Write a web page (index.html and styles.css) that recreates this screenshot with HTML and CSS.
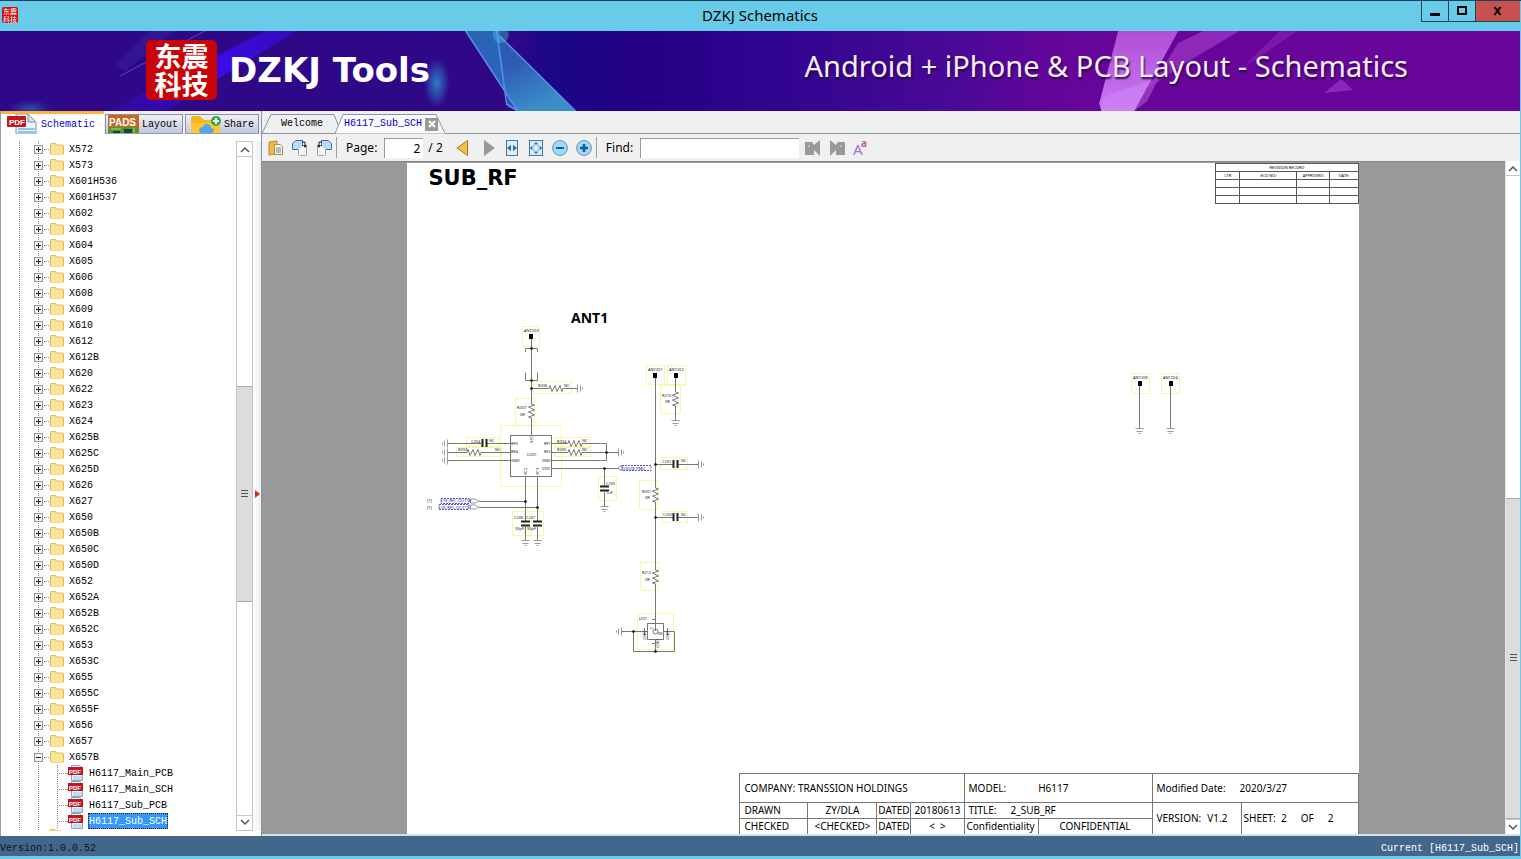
FILE: index.html
```html
<!DOCTYPE html>
<html lang="en">
<head>
<meta charset="utf-8">
<title>DZKJ Schematics</title>
<link rel="stylesheet" href="styles.css">
</head>
<body>
<div class="window">
  <header class="titlebar">
    <span class="app-icon" aria-hidden="true"><span>东震</span><span>科技</span></span>
    <h1 class="title">DZKJ Schematics</h1>
    <div class="controls">
      <button class="ctl min" aria-label="Minimize"><svg width="12" height="12"><path d="M1 9.500h10" stroke="#000" stroke-width="3"/></svg></button>
      <button class="ctl max" aria-label="Maximize"><svg width="12" height="12"><path d="M2 2h8v7H2z" fill="none" stroke="#000" stroke-width="2"/></svg></button>
      <button class="ctl close" aria-label="Close"><svg width="12" height="12"><path d="M2.500 2l6 8M8.500 2l-6 8" stroke="#000" stroke-width="2"/></svg></button>
    </div>
  </header>

  <section class="banner">
    <svg class="banner-art" viewBox="0 0 1521 80" preserveAspectRatio="none" aria-hidden="true">
      <defs>
        <linearGradient id="beam" x1="0" y1="1" x2="1" y2="0"><stop offset="0" stop-color="#3a0be0" stop-opacity=".2"/><stop offset=".6" stop-color="#3c0be8"/><stop offset="1" stop-color="#3c0be8" stop-opacity=".5"/></linearGradient>
        <linearGradient id="shard" x1="0" y1="0" x2=".6" y2="1"><stop offset="0" stop-color="#215aa0"/><stop offset=".5" stop-color="#2f5bb5"/><stop offset="1" stop-color="#3a8fc8"/></linearGradient>
        <linearGradient id="pink" x1="0" y1="0" x2="0" y2="1"><stop offset="0" stop-color="#b04fd6"/><stop offset="1" stop-color="#c878f4"/></linearGradient>
        <radialGradient id="glow"><stop offset="0" stop-color="#2c7cc4"/><stop offset="1" stop-color="#2c7cc4" stop-opacity="0"/></radialGradient>
      </defs>
      <path d="M110 80 L265 0 H297 L165 80z" fill="url(#beam)"/>
      <path d="M120 45 L205 0" stroke="#5a44c8"/>
      <path d="M115 35 L150 0 H175 L125 40z" fill="#3c2aa0" opacity=".4"/>
      <ellipse cx="437" cy="52" rx="13" ry="25" fill="url(#glow)"/>
      <ellipse cx="30" cy="78" rx="22" ry="9" fill="url(#glow)" opacity=".6"/>
      <path d="M466 0 H496 L500 5 L576 80 H518z" fill="url(#shard)"/>
      <path d="M466 0 H500 L508 76 L518 80z" fill="#2c68b8" opacity=".8"/>
      <path d="M466 0 L518 80M500 5L576 80M497 0L507 73L518 80" stroke="#5b8df0" fill="none" stroke-width="1.500"/>
      <circle cx="501" cy="4" r="8" fill="#4cc8d8" opacity=".4"/>
      <path d="M1119 0 H1179 L1135 80 H1102 L1100 72z" fill="url(#pink)"/>
      <path d="M1104 66 L1160 46 L1148 70 L1135 80 H1102z" fill="#d694fb" opacity=".35"/>
      <path d="M1179 12 L1204 0 H1240 L1190 30 L1145 60 L1165 34z" fill="#a43cc8" opacity=".65"/>
      <path d="M1245 35L1280 0H1298L1262 25z" fill="#9a34c0" opacity=".4"/>
      <path d="M1325 62L1342 48L1354 59z" fill="#a040c8" opacity=".6"/>
    </svg>
    <div class="logo" aria-hidden="true"><span>东震</span><span>科技</span></div>
    <strong class="brand">DZKJ Tools</strong>
    <p class="tagline">Android + iPhone &amp; PCB Layout - Schematics</p>
  </section>

  <main class="body">
    <aside class="sidebar">
      <nav class="side-tabs">
        <button class="side-tab active">
          <svg width="30" height="20" viewBox="0 0 30 20"><path d="M9 0h12l8 8v12H9z" fill="#edf5fb" stroke="#7d97ad"/><path d="M21 0v8h8z" fill="#c9dff0" stroke="#7d97ad"/><path d="M11 15h17M11 18h17" stroke="#8fc6ea" stroke-width="2"/><rect width="19" height="11" y="2" rx="1" fill="#c01820"/><text x="2" y="11" class="pdf-label">PDF</text></svg>
          Schematic
        </button>
        <button class="side-tab">
          <svg width="31" height="19" viewBox="0 0 31 19"><rect width="31" height="19" fill="#c8641c"/><rect y="12" x="1" width="29" height="7" fill="#4b9b35"/><path d="M5 19v-3h7v3M16 14h8v5h-8z" fill="#24422a"/><path d="M3 14h10M26 13v6" stroke="#b7d85a"/><text x="1" y="11" class="pads-label">PADS</text></svg>
          Layout
        </button>
        <button class="side-tab share">
          <svg width="32" height="19" viewBox="0 0 32 19"><path d="M1 3q0-2 2-2h7l4 4h14q2 0 2 2v12H1z" fill="#f9b616"/><path d="M1 8h29v11H1z" fill="#fdc632"/><path d="M9 16q0-4 4-4 1-4 5-3 3 1 3 4 3 0 3 3l-2 2H11z" fill="#54a9ee"/><circle cx="26" cy="6" r="5" fill="#36a447"/><path d="M23 6h6M26 3v6" stroke="#fff" stroke-width="2"/></svg>
          Share
        </button>
      </nav>
      <div class="tree-area">
        <ul class="tree" id="tree"></ul>
        <div class="scrollbar tree-scroll">
          <button class="arrow" aria-label="Scroll up"><svg width="10" height="7"><path d="M1 6l4-4 4 4" fill="none" stroke="#555" stroke-width="1.500"/></svg></button>
          <div class="before"></div>
          <div class="thumb"><span class="grip"></span></div>
          <div class="after"></div>
          <button class="arrow" aria-label="Scroll down"><svg width="10" height="7"><path d="M1 1l4 4 4-4" fill="none" stroke="#555" stroke-width="1.500"/></svg></button>
        </div>
        <div class="splitter"><svg width="5" height="8"><path d="M0 0l5 4-5 4z" fill="#e02818"/></svg></div>
      </div>
    </aside>

    <section class="workspace">
      <nav class="doc-tabs">
        <svg class="tab-shape" width="186" height="23" aria-hidden="true"><path d="M0 22.500L9 3.500H72L76 14" fill="none" stroke="#8298a8"/><path d="M73 22.500L81 3.500H174L183 22.500" fill="#fafafa" stroke="#8298a8"/></svg>
        <button class="doc-tab">Welcome</button>
        <button class="doc-tab current">H6117_Sub_SCH</button>
        <button class="tab-close" aria-label="Close tab"><svg width="12" height="12"><path d="M3 3l6 6M9 3l-6 6" stroke="#fff" stroke-width="2"/></svg></button>
      </nav>
      <div class="toolbar">
        <button class="tool" aria-label="Open"><svg width="16" height="16" viewBox="0 0 16 16"><path d="M1 2l8-1v13l-8 1z" fill="#f0b84c" stroke="#c08828"/><path d="M6.500 4.500h6l2 2v8h-8z" fill="#fff8e0" stroke="#b98a3c"/><path d="M8 8h5M8 10h5M8 12h5" stroke="#4d82c4"/></svg></button>
        <button class="tool" aria-label="Rotate right"><svg width="16" height="16" viewBox="0 0 16 16"><path d="M3.500.500h7v9H.500v-6z" fill="#b9d9f6" stroke="#44719f"/><path d="M6.500 9.500v5l1 1h7v-10h-3" fill="#f3f5f6" stroke="#a3a8ac"/><path d="M10 2h3v4" fill="none" stroke="#222"/><path d="M11 5h4l-2 3z" fill="#222"/></svg></button>
        <button class="tool" aria-label="Rotate left"><svg width="16" height="16" viewBox="0 0 16 16"><path d="M12.500.500h-7v9h10v-6z" fill="#b9d9f6" stroke="#44719f"/><path d="M9.500 9.500v5l-1 1h-7v-10h3" fill="#f3f5f6" stroke="#a3a8ac"/><path d="M6 2H3v4" fill="none" stroke="#222"/><path d="M1 5h4L3 8z" fill="#222"/></svg></button>
        <span class="sep"></span>
        <label class="tool-label" for="page">Page:</label>
        <input id="page" class="page-input" value="2">
        <span class="page-total">/ 2</span>
        <button class="tool" aria-label="Previous page"><svg width="16" height="16" viewBox="0 0 16 16"><path d="M2 8L12.500.500v15z" fill="#f3c248" stroke="#a9761a"/></svg></button>
        <button class="tool next" aria-label="Next page"><svg width="16" height="16" viewBox="0 0 16 16"><path d="M14 8L3 0v16z" fill="#989898"/></svg></button>
        <button class="tool" aria-label="Fit width"><svg width="16" height="16" viewBox="0 0 16 16"><rect x="2.500" y=".500" width="11" height="15" fill="#d9ecfa" stroke="#48729c"/><path d="M3 8l4-3v6zM13 8L9 5v6z" fill="#286ba8"/></svg></button>
        <button class="tool" aria-label="Fit page"><svg width="16" height="16" viewBox="0 0 16 16"><rect x="1.500" y=".500" width="13" height="15" fill="#d9ecfa" stroke="#48729c"/><circle cx="8" cy="8" r="3.500" fill="none" stroke="#76a6cc"/><path d="M8 2l2 2H6zM8 14l2-2H6zM2 8l2-2v4zM14 8l-2-2v4z" fill="#286ba8"/></svg></button>
        <button class="tool" aria-label="Zoom out"><svg width="16" height="16" viewBox="0 0 16 16"><circle cx="8" cy="8" r="7.400" fill="#9fd8fa" stroke="#6f8ea8"/><path d="M4 8h8" stroke="#165a98" stroke-width="2"/></svg></button>
        <button class="tool" aria-label="Zoom in"><svg width="16" height="16" viewBox="0 0 16 16"><circle cx="8" cy="8" r="7.400" fill="#9fd8fa" stroke="#6f8ea8"/><path d="M4 8h8M8 4v8" stroke="#165a98" stroke-width="2.500"/></svg></button>
        <span class="sep"></span>
        <label class="tool-label" for="find">Find:</label>
        <input id="find" class="find-input">
        <button class="tool" aria-label="Find previous"><svg width="16" height="16" viewBox="0 0 16 16"><path d="M0 2h7l2 3 6-5v16L9 10v5H0z" fill="#999"/><circle cx="4" cy="6" r="1" fill="#ccc"/></svg></button>
        <button class="tool" aria-label="Find next"><svg width="16" height="16" viewBox="0 0 16 16"><path d="M16 2H9L7 5 1 0v16l6-6v5h9z" fill="#999"/><circle cx="12" cy="6" r="1" fill="#ccc"/></svg></button>
        <button class="tool" aria-label="Match case"><svg class="case-icon" width="16" height="16" viewBox="0 0 16 16"><text x="0" y="15" class="case-big">A</text><text x="8" y="7" class="case-small">a</text></svg></button>
      </div>
      <div class="viewer">
        <div class="canvas">
          <article class="sheet">
            <div class="sheet-head">
              <h2>SUB_RF</h2>
              <table class="revision">
                <colgroup><col class="r1"><col class="r2"><col class="r3"><col class="r4"></colgroup>
                <tr><th colspan="4">REVISION RECORD</th></tr>
                <tr><th>LTR</th><th>ECO NO:</th><th>APPROVED:</th><th>DATE:</th></tr>
                <tr><td></td><td></td><td></td><td></td></tr>
                <tr><td></td><td></td><td></td><td></td></tr>
                <tr><td></td><td></td><td></td><td></td></tr>
              </table>
            </div>
            <svg class="schematic" viewBox="407 204 952 569" role="img" aria-label="Antenna circuit">
              <defs>
                <path id="rv" d="M0-8v1l3 1-6 2 6 3-6 2 6 3-6 2 3 1v1"/>
                <path id="rh" d="M-8 0h1l1-3 2 6 3-6 2 6 3-6 2 6 1-3h1"/>
                <path id="gv" d="M-4 0h8M-3 3h6M-1 5h2" stroke="#999"/>
                <path id="gh" d="M0-4v8M3-3v6M5-1v2" stroke="#999"/>
              </defs>
              <text x="571" y="323" class="ant-title">ANT1</text>
              <g class="bounds">
                <rect x="522.500" y="326.500" width="17" height="20"/><rect x="533.500" y="381.500" width="38" height="12"/><rect x="515.500" y="398.500" width="19" height="27"/><rect x="500.500" y="425.500" width="61" height="61"/>
                <rect x="466.500" y="437.500" width="32" height="9"/><rect x="456.500" y="447.500" width="45" height="9"/><rect x="554.500" y="437.500" width="36" height="9"/><rect x="554.500" y="447.500" width="36" height="9"/>
                <rect x="646.500" y="365.500" width="18" height="19"/><rect x="667.500" y="365.500" width="18" height="19"/><rect x="660.500" y="385.500" width="20" height="28"/><rect x="660.500" y="457.500" width="27" height="12"/>
                <rect x="598.500" y="476.500" width="18" height="24"/><rect x="639.500" y="480.500" width="18" height="29"/><rect x="662.500" y="511.500" width="25" height="11"/><rect x="512.500" y="511.500" width="19" height="24"/><rect x="524.500" y="511.500" width="19" height="24"/>
                <rect x="640.500" y="562.500" width="18" height="28"/><rect x="637.500" y="613.500" width="36" height="36"/><rect x="1131.500" y="373.500" width="18" height="20"/><rect x="1161.500" y="373.500" width="18" height="20"/>
              </g>
              <g class="wires">
                <path d="M531.500 336V403M531.500 419V436M525.500 352v-3.500h12v3.500M525.500 372.500v8h12v-8M531 388.500h17M563 388.500h14"/>
                <rect x="510.500" y="435.500" width="41" height="41"/>
                <path d="M448 443.500h34M486 443.500h24M448 452.500h18M482 452.500h28M448 460.500h62M551 443.500h17M582 443.500h24.500v17H551M551 452.500h17M582 452.500h36M551 468.500h67M604.500 468v18M604.500 492v14"/>
                <path d="M525.500 476v45M537.500 476v45M525.500 527v13M537.500 527v13M479 501.500h46M479 507.500h58"/>
                <path d="M655.500 375v113M675.500 375v16M675.500 407v13M655 464.500h18M678 464.500h20M655.500 503v66M655 517.500h18M678 517.500h20M655.500 585v46"/>
                <rect x="647.500" y="623.500" width="16" height="16"/><circle cx="655.500" cy="631.500" r="2.500"/><path d="M622 631.500h25M663 631.500h11.500v20H633.500v-20M655.500 639v12M652 619.500h4M652 643.500h4M644.500 628v7M667.500 628v7"/>
                <path d="M1139.500 383v45M1170.500 383v45"/>
                <use href="#rv" x="531.500" y="411"/><use href="#rh" x="556" y="388.500"/><use href="#rh" x="474" y="452.500"/><use href="#rh" x="575" y="443.500"/><use href="#rh" x="575" y="452.500"/><use href="#rv" x="675.500" y="399"/><use href="#rv" x="655.500" y="495"/><use href="#rv" x="655.500" y="577"/>
                <path class="port" d="M470.500 499h5l3 2-3 2h-5zM470.500 505h5l3 2-3 2h-5zM618 468l2-2h2v4h-2z"/>
              </g>
              <g class="grounds">
                <use href="#gv" x="525.500" y="540.500"/><use href="#gv" x="537.500" y="540.500"/><use href="#gv" x="604.500" y="506.500"/><use href="#gv" x="675.500" y="420.500"/><use href="#gv" x="1139.500" y="428.500"/><use href="#gv" x="1170.500" y="428.500"/>
                <use href="#gh" x="577.500" y="388.500"/><use href="#gh" x="618.500" y="452.500"/><use href="#gh" x="698.500" y="464.500"/><use href="#gh" x="698.500" y="517.500"/>
                <use href="#gh" transform="translate(447.500 443.500) rotate(180)"/><use href="#gh" transform="translate(447.500 452.500) rotate(180)"/><use href="#gh" transform="translate(447.500 460.500) rotate(180)"/><use href="#gh" transform="translate(621.500 631.500) rotate(180)"/>
              </g>
              <path class="caps" d="M482.500 439v8M486.500 439v8M673.500 460v8M677.500 460v8M673.500 513v8M677.500 513v8M600 486.500h9M600 490.500h9M521 521.500h9M521 525.500h9M533 521.500h9M533 525.500h9"/>
              <path class="pads" d="M529 334h4v5h-4zM653 373h4v5h-4zM674 373h4v5h-4zM1138 381h4v5h-4zM1169 381h4v5h-4z"/>
              <g class="dots"><circle cx="531.500" cy="348.500" r="1.300"/><circle cx="531.500" cy="380.500" r="1.300"/><circle cx="531.500" cy="388.500" r="1.300"/><circle cx="606.500" cy="452.500" r="1.300"/><circle cx="604.500" cy="468.500" r="1.300"/><circle cx="525.500" cy="501.500" r="1.300"/><circle cx="537.500" cy="507.500" r="1.300"/><circle cx="655.500" cy="464.500" r="1.300"/><circle cx="655.500" cy="517.500" r="1.300"/><circle cx="633.500" cy="631.500" r="1.300"/><circle cx="655.500" cy="651.500" r="1.300"/></g>
              <g class="parts">
                <text x="524" y="332">ANT203</text><text x="648" y="371">ANT201</text><text x="669" y="371">ANT202</text><text x="1133" y="379">ANT206</text><text x="1163" y="379">ANT204</text>
                <text x="538" y="387">R206</text><text x="564" y="387">NC</text><text x="517" y="409">R207</text><text x="520" y="416">0R</text>
                <text x="471" y="443">C204</text><text x="489" y="442">NC</text><text x="458" y="451">R203</text><text x="495" y="451">NC</text>
                <text x="557" y="443">R204</text><text x="582" y="442">NC</text><text x="557" y="451">R205</text><text x="582" y="451">NC</text>
                <text x="511" y="445">RF3</text><text x="511" y="453">RF4</text><text x="511" y="462">GND</text><text x="544" y="445">RF1</text><text x="544" y="453">RF2</text><text x="542" y="462">GND</text><text x="542" y="470">VDD</text><text x="527" y="456">U201</text>
                <text transform="translate(533 443) rotate(-90)">RFC</text><text transform="translate(527 475) rotate(-90)">VC2</text><text transform="translate(539 475) rotate(-90)">VC1</text>
                <text x="606" y="485">C205</text><text x="606" y="494">1uF</text><text x="662" y="397">R210</text><text x="665" y="403">0R</text><text x="662" y="463">C201</text><text x="681" y="462">NC</text>
                <text x="642" y="493">R201</text><text x="645" y="499">0R</text><text x="663" y="516">C202</text><text x="681" y="516">NC</text><text x="642" y="574">R212</text><text x="645" y="581">0R</text>
                <text x="514" y="519">C206</text><text x="526" y="519">C207</text><text x="515" y="530">33pF</text><text x="527" y="530">33pF</text><text x="427" y="502">[1]</text><text x="427" y="509">[1]</text>
                <text x="639" y="620">J201</text><text transform="translate(646 640) rotate(-90)">GND</text><text transform="translate(669 640) rotate(-90)">GND</text><text transform="translate(659 648) rotate(-90)">GND</text><text transform="translate(653 629) rotate(-90)">C</text><text x="658" y="635">IN</text>
              </g>
              <g class="nets"><text x="441" y="502">LTE_RFC_OUT18</text><text x="439" y="509">LTE_RFC_OUT19</text><text x="623" y="470">VIO28_PMU</text><path d="M441 498.500h28v5h-28zM439 504.500h30v5h-30zM622 465.500h29v5h-29z"/></g>
            </svg>
            <table class="title-block">
              <colgroup><col class="c1"><col class="c2"><col class="c3"><col class="c4"><col class="c5"><col class="c6"><col class="c7"><col class="c8"></colgroup>
              <tr class="tall"><td colspan="4">COMPANY: TRANSSION HOLDINGS</td><td colspan="2"><span class="pair wide"><span>MODEL:</span><span>H6117</span></span></td><td colspan="2"><span class="pair"><span>Modified Date:</span><span>2020/3/27</span></span></td></tr>
              <tr><td>DRAWN</td><td class="mid">ZY/DLA</td><td class="mid">DATED</td><td class="mid">20180613</td><td colspan="2"><span class="pair"><span>TITLE:</span><span>2_SUB_RF</span></span></td><td rowspan="2"><span class="pair close-pair"><span>VERSION:</span><span>V1.2</span></span></td><td rowspan="2" class="tight"><span class="pair sheet-no"><span>SHEET:&nbsp; 2</span><span>OF</span><span>2</span></span></td></tr>
              <tr><td>CHECKED</td><td class="mid">&lt;CHECKED&gt;</td><td class="mid">DATED</td><td class="mid">&lt;&nbsp; &gt;</td><td class="tight">Confidentiality</td><td class="mid">CONFIDENTIAL</td></tr>
            </table>
          </article>
        </div>
        <div class="scrollbar view-scroll">
          <button class="arrow" aria-label="Scroll up"><svg width="10" height="7"><path d="M1 6l4-4 4 4" fill="none" stroke="#555" stroke-width="1.500"/></svg></button>
          <div class="before"></div>
          <div class="thumb"><span class="grip"></span></div>
          <button class="arrow" aria-label="Scroll down"><svg width="10" height="7"><path d="M1 1l4 4 4-4" fill="none" stroke="#555" stroke-width="1.500"/></svg></button>
        </div>
      </div>
    </section>
  </main>

  <footer class="status"><span class="version">Version:1.0.0.52</span><span class="open-file">Current [H6117_Sub_SCH]</span></footer>
</div>
<script src="script.js"></script>
</body>
</html>
```

FILE: styles.css
```css
* { box-sizing: border-box; }
body { margin: 0; font-family: "Noto Sans", "Open Sans", sans-serif; color: #000; }
button { font: inherit; color: inherit; border: 0; padding: 0; background: none; }
h1, h2, p { margin: 0; font-weight: 400; }
svg { display: block; flex: none; }

.window { display: flex; flex-direction: column; height: 100vh; background: #69cbea; border-top: 1px solid #174458; padding: 0 1px 3px 0; overflow: hidden; }

.titlebar { display: grid; grid-template-columns: 1fr auto 1fr; flex: none; height: 30px; }
.app-icon { display: grid; justify-content: center; margin-top: 6px; width: 16px; height: 16px; margin-left: 2px; padding-top: 1px; border-radius: 2px; background: #c80d0d; color: #fff; font: 400 7px/7px "Noto Sans CJK SC", sans-serif; }
.title { font-size: 15px; line-height: 28px; }
.controls { display: flex; justify-self: end; height: 21px; border: 1px solid #1c4552; border-width: 0 0 1px 1px; }
.ctl { display: grid; place-items: center; width: 27px; border-right: 1px solid #1c4552; }
.ctl.close { width: 44px; background: #c75050; border: 0; }

.banner { position: relative; display: flex; align-items: center; flex: none; height: 80px; padding: 0 112px 2px 146px; background: linear-gradient(90deg, #2e0887 0, #2e0887 34%, #1a0788 36%, #240086 42%, #320590 52%, #4a0996 63%, #66059a 70%, #6a069c 100%); color: #fff; }
.banner-art { position: absolute; inset: 0; width: 100%; height: 100%; }
.logo { position: relative; display: grid; place-content: center; width: 71px; height: 60px; border-radius: 5px; background: #c90408; font: 700 27px/28px "Noto Sans CJK SC", sans-serif; }
.brand { position: relative; margin-left: 12px; font-family: "DejaVu Sans", sans-serif; font-size: 34px; line-height: 40px; }
.tagline { position: relative; margin-left: auto; padding-bottom: 8px; font-size: 29px; line-height: 36px; color: #f6eefc; text-shadow: 1px 2px 2px #2a0448; }

.body { display: flex; flex: 1; min-height: 0; background: #f0f0f0; }
.sidebar { display: flex; flex-direction: column; flex: none; width: 261px; border-left: 1px solid #8da3b4; }
.side-tabs, .doc-tabs, .tree, .status { font-family: "Liberation Mono", monospace; font-size: 10px; }
.side-tabs { display: flex; align-items: flex-end; gap: 1px; height: 23px; }
.side-tab { display: flex; align-items: center; gap: 3px; height: 20px; padding: 0 4px 0 2px; overflow: hidden; border: 1px solid #8494a8; border-bottom-color: #8da3b4; background: linear-gradient(#f0f1f7, #c3c7dc); }
.side-tab.active { height: 23px; padding: 0 9px 0 6px; gap: 4px; border: 0; border-top: 3px solid #ffb23e; background: #fff; color: #0000d8; }
.side-tab.share { margin-left: 1px; gap: 2px; padding-left: 4px; }
.pdf-label { font: 700 8px "Liberation Sans", sans-serif; fill: #fff; }
.pads-label { font: 700 10px "Liberation Sans", sans-serif; fill: #fff; }

.tree-area { display: flex; flex: 1; min-height: 0; background: #fff; padding: 7px 0 5px; }
.tree { flex: 1; margin: 0; padding: 0; list-style: none; overflow: hidden; background: repeating-linear-gradient(#888 0 1px, transparent 1px 2px) 18px 0 / 1px 100% no-repeat, repeating-linear-gradient(#888 0 1px, transparent 1px 2px) 37px 0 / 1px 100% no-repeat; }
.row { display: flex; align-items: center; height: 16px; padding-left: 33px; white-space: pre; }
.expander { display: grid; place-items: center; width: 9px; height: 9px; background: #f4f4f4; border: 1px solid #919191; }
.dash { width: 7px; height: 1px; background: repeating-linear-gradient(90deg, transparent 0 1px, #888 1px 2px); }
.folder { margin-right: 4px; }
.file { padding-left: 56px; }
.file .dash { width: 10px; }
.file::before { content: ""; width: 1px; height: 16px; background: repeating-linear-gradient(#888 0 1px, transparent 1px 2px); }
.file svg { margin-right: 4px; }
.name { padding: 1px 1px 0; line-height: 15px; }
.selected .name { background: #3497fb; color: #fff; outline: 1px dotted #2b1c08; outline-offset: -1px; }
.peek { padding-left: 48px; align-items: flex-start; }

.scrollbar { display: flex; flex-direction: column; flex: none; width: 17px; border: 1px solid #c4c4c4; background: #fff; }
.arrow { display: grid; place-items: center; flex: none; height: 15px; }
.arrow:first-child { border-bottom: 1px solid #c8c8c8; }
.arrow:last-child { border-top: 1px solid #c8c8c8; }
.thumb { display: grid; place-items: center; background: #dcdcdc; border: 1px solid #aaa; border-width: 1px 0; }
.grip { width: 7px; height: 8px; background: repeating-linear-gradient(#555 0 1px, transparent 1px 3px); }
.tree-scroll .before { flex: 230; }
.tree-scroll .thumb { flex: 214; }
.tree-scroll .after { flex: 214; }
.splitter { display: flex; align-items: center; width: 8px; padding: 16px 0 0 2px; background: linear-gradient(90deg, #fff, #eceff2); }

.workspace { display: flex; flex-direction: column; flex: 1; min-width: 0; border-left: 1px solid #8b979f; }
.doc-tabs { position: relative; display: flex; align-items: center; flex: none; height: 23px; padding: 4px 0 0 19px; border-bottom: 1px solid #8b979f; }
.tab-shape { position: absolute; left: 0; top: 0; }
.doc-tab { position: relative; line-height: 16px; }
.current { margin-left: 21px; color: #0000d8; }
.tab-close { position: relative; margin-left: 3px; display: grid; place-items: center; width: 13px; height: 13px; background: #999; }

.toolbar { display: flex; align-items: center; gap: 8px; flex: none; height: 27px; padding-left: 6px; font-size: 12px; }
.tool { flex: none; width: 16px; height: 16px; }
.next { margin-left: 2px; margin-right: -1px; }
.sep { width: 1px; height: 21px; margin: 0 -4px; background: #a0a0a0; }
.tool-label { margin: 0 -1px 0 5px; }
.toolbar input { height: 20px; border: 0; border-top: 1px solid #9a9a9a; border-left: 1px solid #9a9a9a; background: #fff; font: inherit; }
.page-input { width: 39px; padding: 0 3px 0 0; text-align: right; }
.page-total { margin: 0 4px 0 -3px; white-space: pre; }
.toolbar .find-input { width: 159px; margin-right: -2px; }
.case-icon { overflow: visible; }
.case-big { font: 15px "Noto Sans", sans-serif; fill: #9a70e8; }
.case-small { font: 700 10px "Noto Sans", sans-serif; fill: #c054a8; }

.viewer { display: flex; flex: 1; min-height: 0; border-bottom: 2px solid #d4e0e8; background: #999; }
.canvas { display: flex; justify-content: center; flex: 1; min-width: 0; padding: 1px 2px 0 0; border-top: 1px solid #858585; overflow: hidden; }
.view-scroll { width: 15px; border-width: 0 0 0 1px; border-color: #e4e4e4; }
.view-scroll .before { flex: 322; }
.view-scroll .thumb { flex: 320; }

.sheet { display: flex; flex-direction: column; flex: none; width: 952px; background: #fff; }
.sheet-head { display: flex; justify-content: space-between; flex: none; height: 41px; padding-left: 22px; }
.sheet-head h2 { font: 700 21px/30px "DejaVu Sans", sans-serif; }
table { border-collapse: collapse; table-layout: fixed; }
.revision { width: 143px; height: 41px; font-size: 4px; line-height: 5px; }
.revision th, .revision td { height: 8px; padding: 0; border: 1px solid #555; font-weight: 400; }
.r1 { width: 24px; }
.r2 { width: 57px; }
.r3 { width: 33px; }
.r4 { width: 28px; }
.schematic { width: 100%; height: 569px; }
.title-block { align-self: flex-end; flex: none; width: 619px; font-size: 10px; line-height: 15px; }
.title-block td { height: 16px; padding: 0 4px; border: 1px solid #777; border-bottom: 0; white-space: nowrap; }
.title-block .tall td { height: 29px; }
.title-block .mid { text-align: center; padding: 0; }
.title-block .tight { padding: 0 2px; }
.c1 { width: 68px; }
.c2 { width: 69px; }
.c3 { width: 34px; }
.c4 { width: 53px; }
.c5 { width: 74px; }
.c6 { width: 114px; }
.c7 { width: 89px; }
.c8 { width: 117px; }
.pair { display: flex; gap: 14px; }
.pair.wide { gap: 32px; }
.pair.close-pair { gap: 6px; }

.ant-title { font: 700 14px "Noto Sans", sans-serif; }
.bounds rect { fill: none; stroke: #f4f47c; stroke-dasharray: 2 1; }
.wires { fill: none; stroke: #777; }
.wires .port { fill: #fff; stroke: #999; }
.grounds { fill: none; }
.caps { stroke: #222; stroke-width: 2; }
.pads { fill: #000; }
.parts { font: 4px "Noto Sans", sans-serif; fill: #222; }
.nets { font: 4px "Noto Sans", sans-serif; fill: #2020b0; }
.nets path { fill: none; stroke: #5555cc; stroke-dasharray: 2 1; }

.status { display: flex; justify-content: space-between; align-items: flex-end; flex: none; height: 20px; background: #43668b; line-height: 14px; }
.version { color: #0a1420; }
.open-file { color: #fff; padding-right: 1px; }
```

FILE: script.js
```javascript
const folders = "X572 X573 X601H536 X601H537 X602 X603 X604 X605 X606 X608 X609 X610 X612 X612B X620 X622 X623 X624 X625B X625C X625D X626 X627 X650 X650B X650C X650D X652 X652A X652B X652C X653 X653C X655 X655C X655F X656 X657 X657B".split(" ");
const files = ["H6117_Main_PCB", "H6117_Main_SCH", "H6117_Sub_PCB", "H6117_Sub_SCH"];

const folderIcon = '<svg class="folder" width="14" height="12"><path d="M.5 1.500q0-1 1-1h4l1 1.500h6q1 0 1 1v8H.5z" fill="#fce48c" stroke="#dfb94c"/><path d="M1 4h12v7H1z" fill="#fbe694"/></svg>';
const pdfIcon = '<svg width="16" height="16"><path d="M3.500.500h8l3 3v12h-11z" fill="#e5f3fb" stroke="#8fa6b4"/><path d="M5 12h9M5 14h9" stroke="#8ccdf0"/><rect y="2" width="15" height="8" fill="#c4161e"/><text x="1" y="8.500" font-family="Liberation Sans" font-weight="700" font-size="6" fill="#fff">PDF</text></svg>';

const rows = folders.map((name) => {
  const open = name === "X657B";
  const mark = open ? "M1 3.500h5" : "M1 3.500h5M3.500 1v5";
  return `<li class="row"><button class="expander" aria-label="Toggle ${name}"><svg width="7" height="7"><path d="${mark}" stroke="#222"/></svg></button><span class="dash"></span>${folderIcon}<span class="name">${name}</span></li>`;
});

files.forEach((name) => {
  const state = name === "H6117_Sub_SCH" ? " selected" : "";
  rows.push(`<li class="row file${state}"><span class="dash"></span>${pdfIcon}<span class="name">${name}</span></li>`);
});

rows.push(`<li class="row peek">${folderIcon}</li>`);

document.getElementById("tree").innerHTML = rows.join("");
```
